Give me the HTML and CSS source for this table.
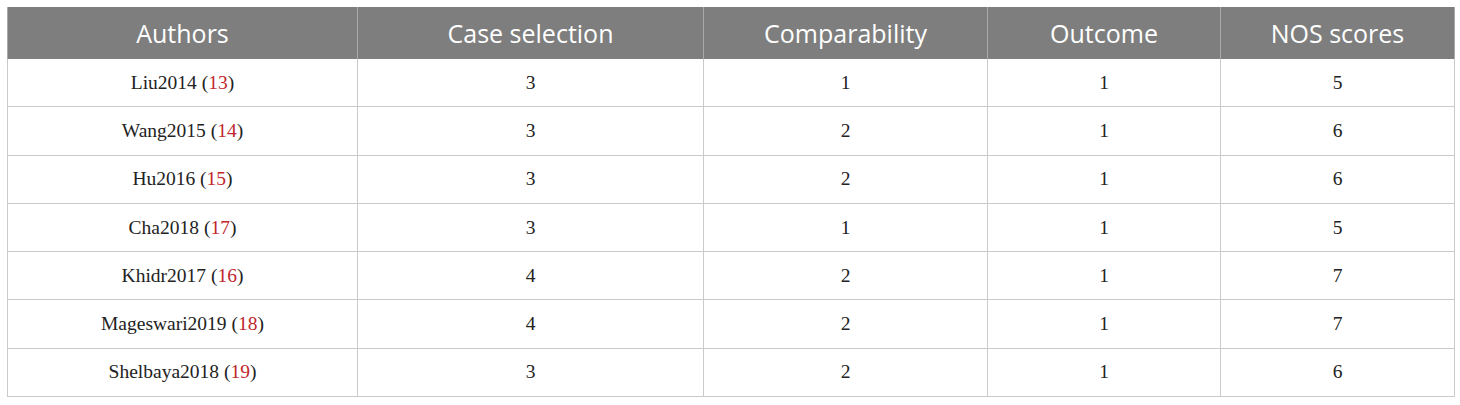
FILE: index.html
```html
<!DOCTYPE html>
<html>
<head>
<meta charset="utf-8">
<link rel="stylesheet" href="styles.css">
</head>
<body>
<table class="nos">
  <colgroup>
    <col class="c1"><col class="c2"><col class="c3"><col class="c4"><col class="c5">
  </colgroup>
  <thead>
    <tr><th>Authors</th><th>Case selection</th><th>Comparability</th><th>Outcome</th><th>NOS scores</th></tr>
  </thead>
  <tbody>
    <tr><td>Liu2014 (<span class="ref">13</span>)</td><td>3</td><td>1</td><td>1</td><td>5</td></tr>
    <tr><td>Wang2015 (<span class="ref">14</span>)</td><td>3</td><td>2</td><td>1</td><td>6</td></tr>
    <tr><td>Hu2016 (<span class="ref">15</span>)</td><td>3</td><td>2</td><td>1</td><td>6</td></tr>
    <tr><td>Cha2018 (<span class="ref">17</span>)</td><td>3</td><td>1</td><td>1</td><td>5</td></tr>
    <tr><td>Khidr2017 (<span class="ref">16</span>)</td><td>4</td><td>2</td><td>1</td><td>7</td></tr>
    <tr><td>Mageswari2019 (<span class="ref">18</span>)</td><td>4</td><td>2</td><td>1</td><td>7</td></tr>
    <tr><td>Shelbaya2018 (<span class="ref">19</span>)</td><td>3</td><td>2</td><td>1</td><td>6</td></tr>
  </tbody>
</table>
</body>
</html>
```
FILE: styles.css
```css
html, body {
  margin: 0;
  padding: 0;
  background: #ffffff;
}
body {
  padding: 7px 0 0 7px;
}
.nos {
  border-collapse: collapse;
  width: 1447px;
  table-layout: fixed;
}
.c1 { width: 350px; }
.c2 { width: 346px; }
.c3 { width: 284px; }
.c4 { width: 233px; }
.c5 { width: 234px; }
.nos th {
  background: #7d7e7d;
  color: #ffffff;
  font-family: "Open Sans", "Noto Sans", sans-serif;
  font-weight: 400;
  font-size: 25px;
  height: 52px;
  padding: 0;
  text-align: center;
  vertical-align: middle;
  border-left: 1px solid #a9aaa9;
  border-right: 1px solid #a9aaa9;
}
.nos td {
  font-family: "Liberation Serif", "Times New Roman", serif;
  font-size: 19.5px;
  color: #222222;
  text-align: center;
  vertical-align: middle;
  height: 47.3px;
  padding: 0;
  border: 1px solid #cacaca;
}
.nos tbody tr:first-child td {
  border-top: none;
}
.ref {
  color: #c0272d;
}
```
